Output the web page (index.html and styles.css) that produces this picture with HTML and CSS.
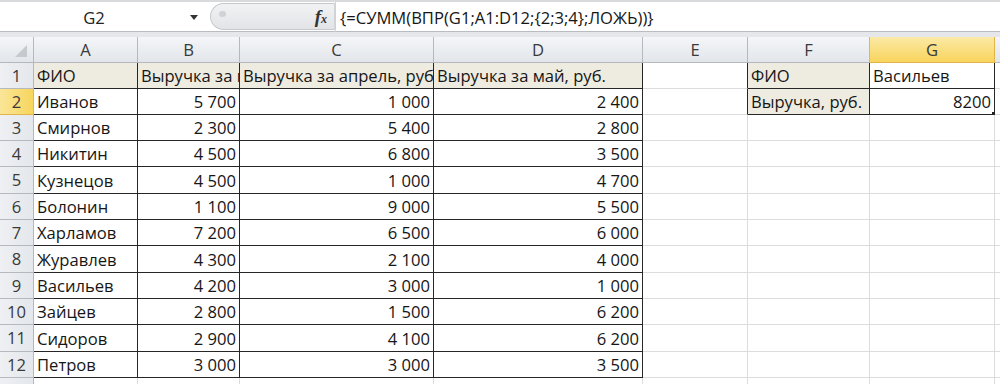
FILE: index.html
```html
<!DOCTYPE html>
<html lang="ru">

<head>
  <meta charset="UTF-8">
  <meta name="viewport" content="width=device-width, initial-scale=1.0">
  <title>ВПР - выручка по сотруднику</title>
  <link rel="stylesheet" href="styles.css">
</head>

<body>
  <div class="formula-bar">
    <div class="name-box">
      <span class="cell-ref">G2</span>
      <svg class="drop" width="8" height="5" viewBox="0 0 8 5"><path d="M0 0h8L4 5z" fill="#333"/></svg>
    </div>
    <div class="grip">
      <span class="knob"></span>
      <span class="fx">f<small>x</small></span>
    </div>
    <div class="formula">{=СУММ(ВПР(G1;A1:D12;{2;3;4};ЛОЖЬ))}</div>
  </div>

  <div class="sheet">
    <div class="corner"><span class="tri"></span></div>
    <div class="ch">A</div>
    <div class="ch">B</div>
    <div class="ch">C</div>
    <div class="ch">D</div>
    <div class="ch">E</div>
    <div class="ch">F</div>
    <div class="ch sel">G</div>
    <div class="ch"></div>

    <div class="rh">1</div>
    <div class="c d tan">ФИО</div>
    <div class="c d tan">Выручка за март, руб.</div>
    <div class="c d tan">Выручка за апрель, руб.</div>
    <div class="c d tan">Выручка за май, руб.</div>
    <div class="c edge"></div>
    <div class="c d tan">ФИО</div>
    <div class="c d">Васильев</div>
    <div class="c"></div>

    <div class="rh sel">2</div>
    <div class="c d">Иванов</div>
    <div class="c d num">5 700</div>
    <div class="c d num">1 000</div>
    <div class="c d num">2 400</div>
    <div class="c edge"></div>
    <div class="c d tan">Выручка, руб.</div>
    <div class="c d num active">8200</div>
    <div class="c"></div>

    <div class="rh">3</div>
    <div class="c d">Смирнов</div>
    <div class="c d num">2 300</div>
    <div class="c d num">5 400</div>
    <div class="c d num">2 800</div>
    <div class="c"></div><div class="c"></div><div class="c"></div><div class="c"></div>

    <div class="rh">4</div>
    <div class="c d">Никитин</div>
    <div class="c d num">4 500</div>
    <div class="c d num">6 800</div>
    <div class="c d num">3 500</div>
    <div class="c"></div><div class="c"></div><div class="c"></div><div class="c"></div>

    <div class="rh">5</div>
    <div class="c d">Кузнецов</div>
    <div class="c d num">4 500</div>
    <div class="c d num">1 000</div>
    <div class="c d num">4 700</div>
    <div class="c"></div><div class="c"></div><div class="c"></div><div class="c"></div>

    <div class="rh">6</div>
    <div class="c d">Болонин</div>
    <div class="c d num">1 100</div>
    <div class="c d num">9 000</div>
    <div class="c d num">5 500</div>
    <div class="c"></div><div class="c"></div><div class="c"></div><div class="c"></div>

    <div class="rh">7</div>
    <div class="c d">Харламов</div>
    <div class="c d num">7 200</div>
    <div class="c d num">6 500</div>
    <div class="c d num">6 000</div>
    <div class="c"></div><div class="c"></div><div class="c"></div><div class="c"></div>

    <div class="rh">8</div>
    <div class="c d">Журавлев</div>
    <div class="c d num">4 300</div>
    <div class="c d num">2 100</div>
    <div class="c d num">4 000</div>
    <div class="c"></div><div class="c"></div><div class="c"></div><div class="c"></div>

    <div class="rh">9</div>
    <div class="c d">Васильев</div>
    <div class="c d num">4 200</div>
    <div class="c d num">3 000</div>
    <div class="c d num">1 000</div>
    <div class="c"></div><div class="c"></div><div class="c"></div><div class="c"></div>

    <div class="rh">10</div>
    <div class="c d">Зайцев</div>
    <div class="c d num">2 800</div>
    <div class="c d num">1 500</div>
    <div class="c d num">6 200</div>
    <div class="c"></div><div class="c"></div><div class="c"></div><div class="c"></div>

    <div class="rh">11</div>
    <div class="c d">Сидоров</div>
    <div class="c d num">2 900</div>
    <div class="c d num">4 100</div>
    <div class="c d num">6 200</div>
    <div class="c"></div><div class="c"></div><div class="c"></div><div class="c"></div>

    <div class="rh">12</div>
    <div class="c d">Петров</div>
    <div class="c d num">3 000</div>
    <div class="c d num">3 000</div>
    <div class="c d num">3 500</div>
    <div class="c"></div><div class="c"></div><div class="c"></div><div class="c"></div>

    <div class="rh"></div>
    <div class="c"></div><div class="c"></div><div class="c"></div><div class="c"></div>
    <div class="c"></div><div class="c"></div><div class="c"></div><div class="c"></div>
  </div>
</body>

</html>
```

FILE: styles.css
```css
body {
  margin: 0;
  font-family: "Open Sans", "Noto Sans", sans-serif;
  font-size: 16.6px;
  color: #161616;
  background: #fff;
  overflow: hidden;
}

/* formula bar */
.formula-bar {
  display: flex;
  height: 37px;
  box-sizing: border-box;
  border-top: 2px solid #d9dadc;
  border-bottom: 5px solid #e5e7ea;
  box-shadow: inset 0 -1px 0 #b9bcc0;
}

.name-box {
  width: 210px;
  display: flex;
  align-items: center;
}

.cell-ref {
  width: 188px;
  text-align: center;
  color: #222;
}

.drop {
  margin-left: 2px;
}

.grip {
  width: 108px;
  margin: 1px 0 2px;
  background: linear-gradient(#f1f2f4, #e2e4e7);
  border: 1px solid #c7c9cc;
  border-right-color: #d2d4d6;
  border-radius: 16px 0 0 16px;
  display: flex;
  align-items: center;
  justify-content: space-between;
  padding: 0 7px 0 8px;
}

.knob {
  width: 7px;
  height: 6px;
  border-radius: 3px;
  background: #d0d2d5;
  margin-top: -6px;
}

.fx {
  font-family: "Liberation Serif", serif;
  font-style: italic;
  font-weight: bold;
  font-size: 19px;
  color: #333;
}

.fx small {
  font-size: 12px;
}

.formula {
  flex: 1;
  padding-left: 4px;
  display: flex;
  align-items: center;
  border-left: 1px solid #cfd1d4;
}

/* sheet grid */
.sheet {
  display: grid;
  grid-template-columns: 34px 104px 102px 194px 209px 105px 122px 125px 1fr;
  grid-template-rows: 26px 26px 26px 26px 26px 27px 26px 26px 27px 26px 26px 27px 26px 26px;
}

.sheet > div {
  box-sizing: border-box;
  border-right: 1px solid #dadcde;
  border-bottom: 1px solid #dadcde;
  overflow: hidden;
  white-space: nowrap;
}

.corner,
.ch,
.rh {
  background: linear-gradient(#f4f6f8, #e2e5ea);
  color: #3a3a3a;
}

.sheet > .corner,
.sheet > .ch,
.sheet > .rh {
  border-right-color: #b5b9bf;
  border-bottom-color: #b5b9bf;
}

.corner {
  position: relative;
}

.tri {
  position: absolute;
  right: 6px;
  bottom: 5px;
  width: 0;
  height: 0;
  border-left: 12px solid transparent;
  border-bottom: 12px solid #c6c9cd;
}

.ch {
  text-align: center;
  line-height: 25px;
}

.rh {
  text-align: center;
  line-height: 25px;
  background: linear-gradient(90deg, #eef0f3, #e4e7eb);
}

.ch.sel {
  background: linear-gradient(#fbeaa6, #f8d45c);
  border-right-color: #e2b54a;
  border-bottom-color: #e2b54a;
}

.rh.sel {
  background: linear-gradient(90deg, #fbe698, #f7d55d);
  border-bottom-color: #e2b54a;
}

.c {
  padding: 0 3px;
  display: flex;
  align-items: center;
}

.sheet > .d,
.sheet > .edge {
  border-right-color: #262626;
}

.sheet > .d {
  border-bottom-color: #262626;
}

.tan {
  background: #eeebe1;
}

.num {
  justify-content: flex-end;
}

.active {
  position: relative;
  overflow: visible;
}

.active::before {
  content: "";
  position: absolute;
  left: -2px;
  top: -2px;
  right: -2px;
  bottom: -2px;
  border: 2px solid #3a3a3a;
}

.active::after {
  content: "";
  position: absolute;
  right: -4px;
  bottom: -4px;
  width: 5px;
  height: 5px;
  background: #222;
  border: 1px solid #fff;
}
```
